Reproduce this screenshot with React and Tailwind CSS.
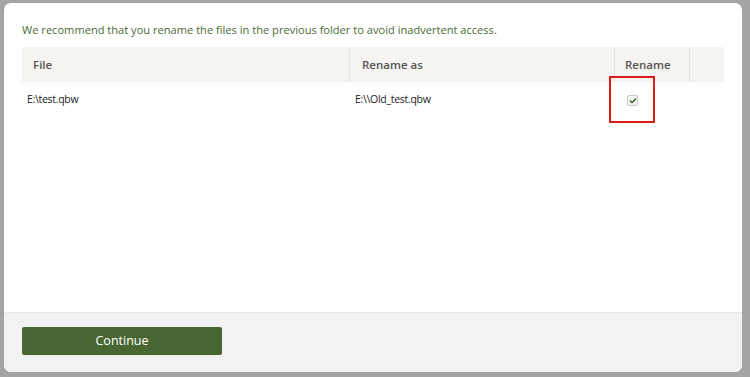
import React from "react";
import { Check } from "lucide-react";

const font = { fontFamily: '"Open Sans", "Noto Sans", sans-serif' };

const App = () => {
  return (
    <div
      className="w-[750px] h-[377px] bg-[#a4a4a4] pl-[4px] pt-[3px] pr-[8px] pb-[5px]"
      style={font}
    >
      <div className="h-full flex flex-col bg-white rounded-[7px] overflow-hidden">
        <div className="flex-1 px-[18px] pt-[19px]">
          <p className="text-[11.1px] leading-[16px] text-[#4b6b36]">
            We recommend that you rename the files in the previous folder to avoid inadvertent access.
          </p>

          <div className="mt-[9px] w-[702px]">
            <div className="flex h-[35px] bg-[#f5f4f1] text-[11.5px] font-semibold text-[#555]">
              <div className="w-[328px] flex items-center pl-[11px] border-r border-[#e4e3df]">
                File
              </div>
              <div className="w-[265px] flex items-center pl-[12px] border-r border-[#e4e3df]">
                Rename as
              </div>
              <div className="w-[75px] flex items-center pl-[10px] border-r border-[#e4e3df]">
                Rename
              </div>
              <div className="flex-1" />
            </div>

            <div className="flex h-[34px] items-center text-[10.5px] text-[#222] pt-[2px]">
              <div className="w-[328px] pl-[5px] tracking-[-0.3px]">E:\test.qbw</div>
              <div className="w-[265px] pl-[5px] tracking-[-0.3px]">E:\\Old_test.qbw</div>
              <div className="relative w-[75px] h-full">
                <div className="absolute left-[12px] top-[11px] w-[11px] h-[11px] rounded-[2px] border border-[#c8c8c8] bg-[#f3f3f3] flex items-center justify-center">
                  <Check className="w-[8px] h-[8px] text-[#2d5a1e]" strokeWidth={4} />
                </div>
                <div className="absolute left-[-6px] top-[-8px] w-[46px] h-[47px] border-2 border-[#e01818]" />
              </div>
            </div>
          </div>
        </div>

        <div className="h-[60px] bg-[#f2f2f2] border-t border-[#e8e8e8] px-[18px] pt-[14px]">
          <button className="w-[200px] h-[28px] rounded-[2px] bg-[#486733] text-white text-[12.5px]">
            Continue
          </button>
        </div>
      </div>
    </div>
  );
};

export default App;
